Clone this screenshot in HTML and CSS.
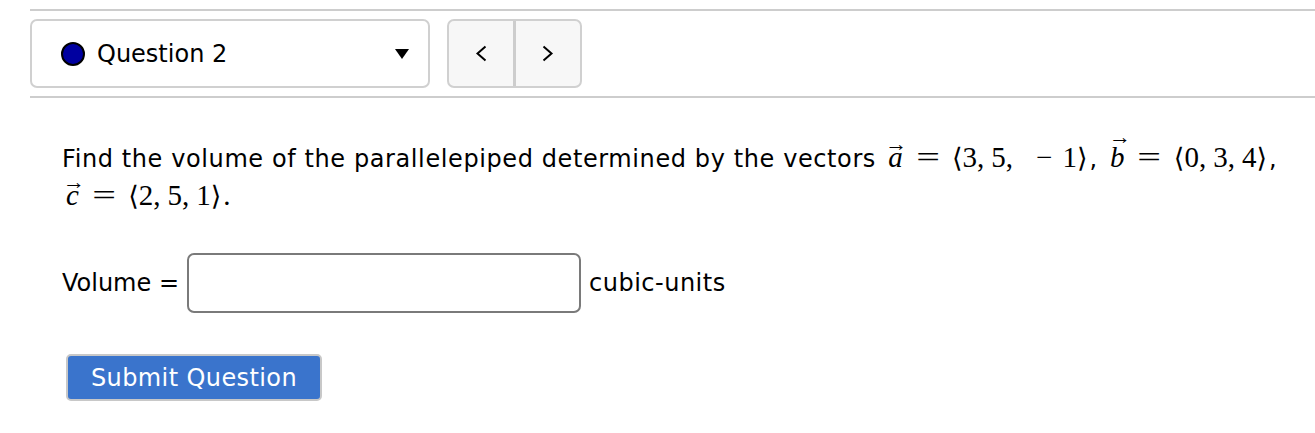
FILE: index.html
```html
<!DOCTYPE html>
<html lang="en">
<head>
  <meta charset="UTF-8">
  <title>Question 2</title>
  <link rel="stylesheet" href="styles.css">
</head>
<body>
  <div class="page">
    <div class="rule"></div>

    <div class="nav-row">
      <div class="q-select">
        <span class="dot"></span>
        <span class="q-label">Question 2</span>
        <span class="caret"></span>
      </div>
      <div class="pager">
        <button class="pager-btn" aria-label="Previous">
          <svg width="12" height="17" viewBox="0 0 12 17"><path d="M10.5 1.5 L2.5 8.5 L10.5 15.5" fill="none" stroke="#000" stroke-width="2"/></svg>
        </button>
        <button class="pager-btn" aria-label="Next">
          <svg width="12" height="17" viewBox="0 0 12 17"><path d="M1.5 1.5 L9.5 8.5 L1.5 15.5" fill="none" stroke="#000" stroke-width="2"/></svg>
        </button>
      </div>
    </div>

    <div class="rule"></div>
  </div>

  <div class="question">
    <p class="prompt">
      Find the volume of the parallelepiped determined by the vectors
      <span class="math"><span class="vec">a</span><span class="rel"><span>=</span></span><span class="fence">&#10216;</span>3<span class="sep">,</span>5<span class="sep">,</span><span class="bin">&minus;</span>1<span class="fence close">&#10217;</span></span>,
      <span class="math"><span class="vec vec-tall">b</span><span class="rel"><span>=</span></span><span class="fence">&#10216;</span>0<span class="sep">,</span>3<span class="sep">,</span>4<span class="fence close">&#10217;</span></span>,
      <span class="math"><span class="vec">c</span><span class="rel"><span>=</span></span><span class="fence">&#10216;</span>2<span class="sep">,</span>5<span class="sep">,</span>1<span class="fence close">&#10217;</span>.</span>
    </p>

    <div class="answer-row">
      <label for="vol">Volume =</label>
      <input id="vol" class="answer" type="text">
      <span class="unit">cubic-units</span>
    </div>

    <button class="submit">Submit Question</button>
  </div>
</body>
</html>
```

FILE: styles.css
```css
body {
  margin: 0;
  font-family: "DejaVu Sans", sans-serif;
  color: #000;
  background: #fff;
}

.page {
  padding: 9px 0 0 30px;
}

.rule {
  height: 2px;
  background-color: #cdcdcd;
}

.nav-row {
  display: flex;
  gap: 17px;
  margin: 8px 0 8px 0;
}

.q-select {
  display: flex;
  align-items: center;
  width: 400px;
  height: 69px;
  box-sizing: border-box;
  border: 2px solid #d0d0d0;
  border-radius: 7px;
  padding: 0 19px 0 29px;
}

.dot {
  width: 20px;
  height: 20px;
  border-radius: 50%;
  background: #0000a0;
  border: 2px solid #000;
  margin-right: 12px;
}

.q-label {
  font-size: 24px;
  flex: 1;
}

/* petit triangle du menu */
.caret {
  width: 0;
  height: 0;
  border-left: 7px solid transparent;
  border-right: 7px solid transparent;
  border-top: 10px solid #000;
}

.pager {
  display: flex;
  width: 135px;
  height: 69px;
  box-sizing: border-box;
  border: 2px solid #d0d0d0;
  border-radius: 7px;
  background: #f7f7f7;
  overflow: hidden;
}

.pager-btn {
  flex: 1;
  border: 0;
  background: transparent;
  display: flex;
  align-items: center;
  justify-content: center;
  padding: 0;
}

.pager-btn + .pager-btn {
  border-left: 3px solid #cdcdcd;
}

.question {
  padding: 0 0 0 62px;
}

.prompt {
  margin: 42px 0 0 0;
  font-size: 24px;
  line-height: 38px;
  letter-spacing: 0.6px;
}

/* formules, a la place du rendu MathJax */
.math {
  font-family: "Liberation Serif", "DejaVu Serif", serif;
  font-size: 29px;
  line-height: 1;
  letter-spacing: 0;
  white-space: nowrap;
}

.vec {
  display: inline-block;
  font-style: italic;
  position: relative;
  margin-left: 4px;
}

.vec::before {
  content: "\2192";
  position: absolute;
  left: -3px;
  top: -10px;
  font-style: normal;
  font-size: 22px;
  line-height: 1;
}

.vec-tall::before {
  top: -17px;
  left: -1px;
}

.rel {
  display: inline-block;
  margin: 0 16px 0 17px;
}

.rel span {
  display: inline-block;
  transform: scaleX(1.45);
}

.fence {
  font-family: "DejaVu Serif", serif;
  font-size: 27px;
}

.close {
  margin-right: 2px;
}

.sep {
  margin-right: 7px;
}

.bin {
  display: inline-block;
  margin: 0 10px 0 16px;
}

.answer-row {
  display: flex;
  align-items: center;
  gap: 8px;
  margin-top: 37px;
  font-size: 24px;
}

.unit {
  letter-spacing: 0.5px;
}

.answer {
  width: 394px;
  height: 60px;
  box-sizing: border-box;
  border: 2px solid #7a7a7a;
  border-radius: 7px;
  font-size: 24px;
}

.submit {
  margin-top: 41px;
  margin-left: 4px;
  width: 256px;
  height: 47px;
  background: #3a74cc;
  color: #fff;
  border: 2px solid #c8c8c8;
  border-radius: 5px;
  font-family: inherit;
  font-size: 24px;
  letter-spacing: 0.4px;
}
```
